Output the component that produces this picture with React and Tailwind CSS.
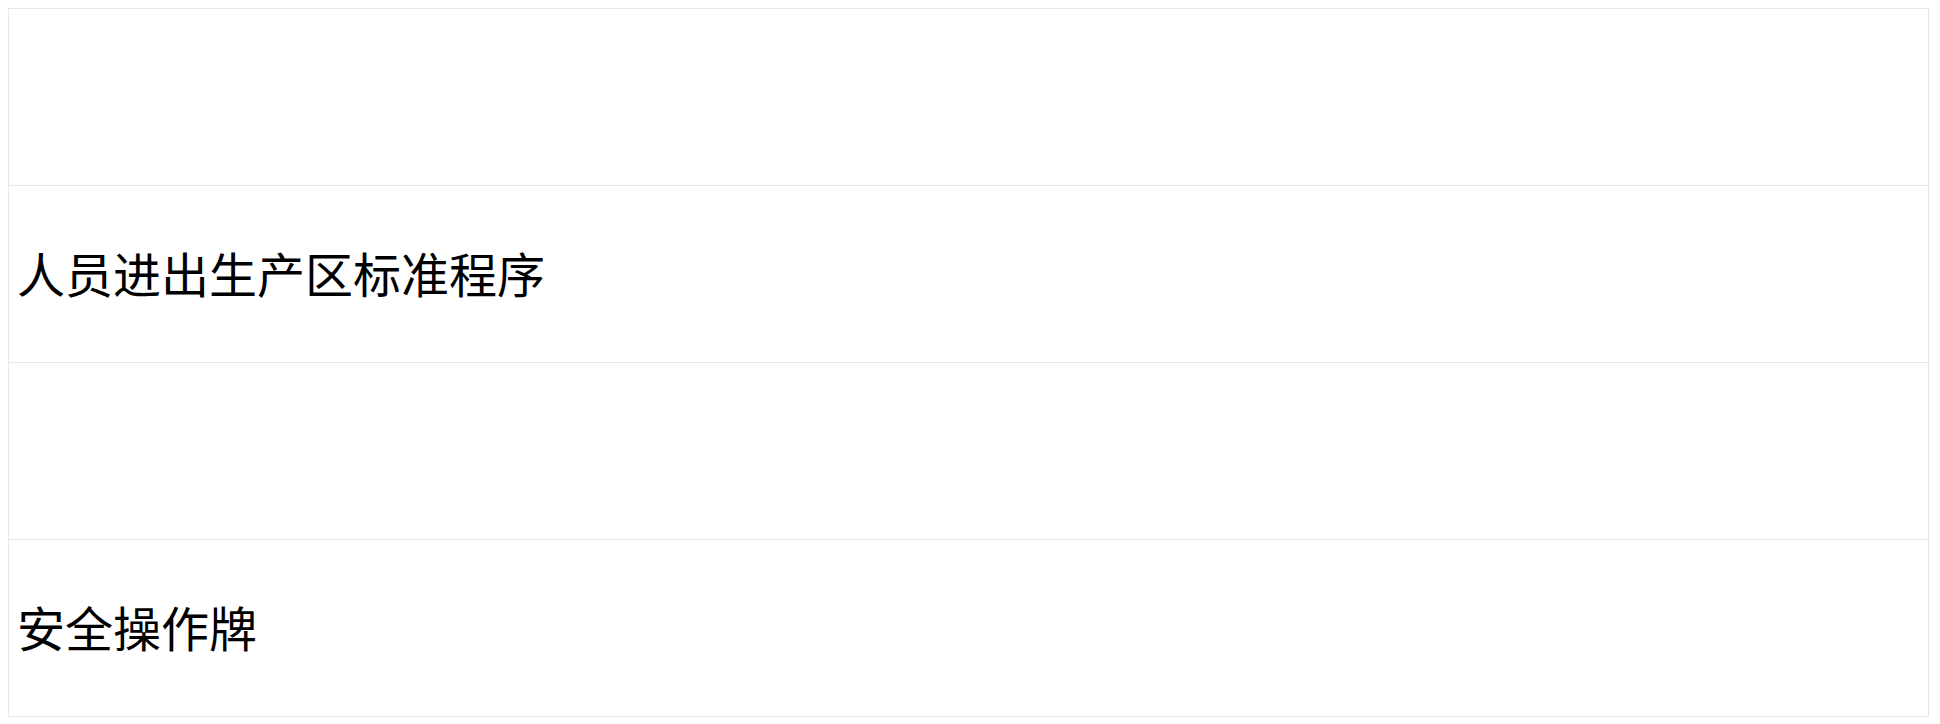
const rows = ["", "人员进出生产区标准程序", "", "安全操作牌"];

export default function App() {
  return (
    <div className="min-h-screen bg-white p-2 font-['Liberation_Sans','Noto_Sans_CJK_SC',sans-serif]">
      <div className="flex w-[1921px] flex-col border border-[#e6e6ec]">
        {rows.map((text, i) => (
          <div
            key={i}
            className={`flex h-[176px] items-center px-2 pt-1.5 text-[48px] leading-none text-black ${
              i > 0 ? "h-[177px] border-t border-[#e6e6ec]" : ""
            }`}
          >
            {text}
          </div>
        ))}
      </div>
    </div>
  );
}
